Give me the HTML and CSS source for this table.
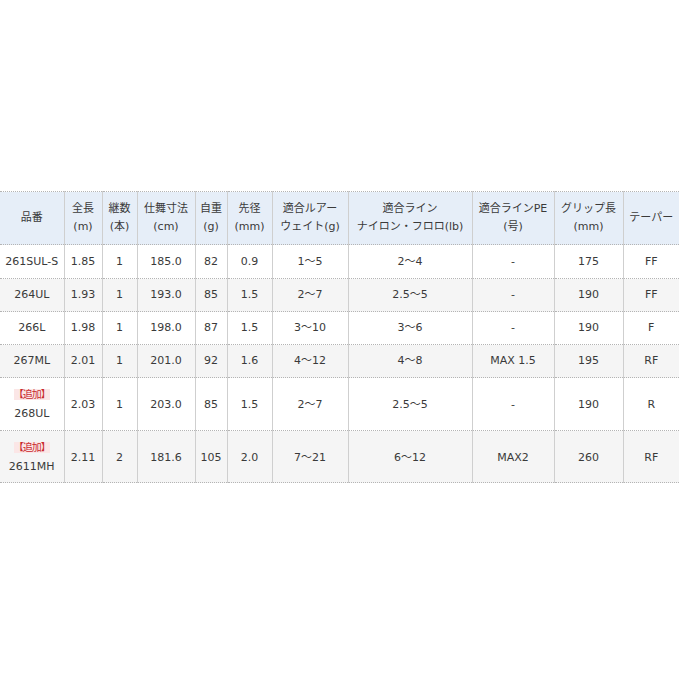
FILE: index.html
```html
<!DOCTYPE html>
<html lang="ja">
<head>
<meta charset="utf-8">
<title>スペック表</title>
<link rel="stylesheet" href="styles.css">
</head>
<body>
<div class="wrap">
<table class="spec">
  <colgroup>
    <col class="c1"><col class="c2"><col class="c3"><col class="c4"><col class="c5"><col class="c6"><col class="c7"><col class="c8"><col class="c9"><col class="c10"><col class="c11">
  </colgroup>
  <thead>
    <tr>
      <th>品番</th>
      <th>全長<br>(m)</th>
      <th>継数<br>(本)</th>
      <th>仕舞寸法<br>(cm)</th>
      <th>自重<br>(g)</th>
      <th>先径<br>(mm)</th>
      <th>適合ルアー<br>ウェイト(g)</th>
      <th>適合ライン<br>ナイロン・フロロ(lb)</th>
      <th>適合ラインPE<br>(号)</th>
      <th>グリップ長<br>(mm)</th>
      <th>テーパー</th>
    </tr>
  </thead>
  <tbody>
    <tr class="first">
      <td>261SUL-S</td><td>1.85</td><td>1</td><td>185.0</td><td>82</td><td>0.9</td><td>1～5</td><td>2～4</td><td>-</td><td>175</td><td>FF</td>
    </tr>
    <tr class="alt">
      <td>264UL</td><td>1.93</td><td>1</td><td>193.0</td><td>85</td><td>1.5</td><td>2～7</td><td>2.5～5</td><td>-</td><td>190</td><td>FF</td>
    </tr>
    <tr>
      <td>266L</td><td>1.98</td><td>1</td><td>198.0</td><td>87</td><td>1.5</td><td>3～10</td><td>3～6</td><td>-</td><td>190</td><td>F</td>
    </tr>
    <tr class="alt">
      <td>267ML</td><td>2.01</td><td>1</td><td>201.0</td><td>92</td><td>1.6</td><td>4～12</td><td>4～8</td><td>MAX 1.5</td><td>195</td><td>RF</td>
    </tr>
    <tr class="tall">
      <td><span class="new">【追加】</span><br>268UL</td><td>2.03</td><td>1</td><td>203.0</td><td>85</td><td>1.5</td><td>2～7</td><td>2.5～5</td><td>-</td><td>190</td><td>R</td>
    </tr>
    <tr class="alt tall last">
      <td><span class="new">【追加】</span><br>2611MH</td><td>2.11</td><td>2</td><td>181.6</td><td>105</td><td>2.0</td><td>7～21</td><td>6～12</td><td>MAX2</td><td>260</td><td>RF</td>
    </tr>
  </tbody>
</table>
</div>
</body>
</html>
```

FILE: styles.css
```css
html, body {
  margin: 0;
  padding: 0;
  background: #ffffff;
}

body {
  font-family: "DejaVu Sans", "Noto Sans CJK JP", sans-serif;
  font-size: 11px;
  color: #3a3a3a;
}

.wrap {
  padding-top: 191px;
  width: 679px;
  overflow: hidden;
}

.spec {
  border-collapse: collapse;
  table-layout: fixed;
  width: 679px;
}

.c1 { width: 64px; }
.c2 { width: 38px; }
.c3 { width: 35px; }
.c4 { width: 58px; }
.c5 { width: 32px; }
.c6 { width: 45px; }
.c7 { width: 76px; }
.c8 { width: 124px; }
.c9 { width: 82px; }
.c10 { width: 69px; }
.c11 { width: 56px; }

.spec th,
.spec td {
  text-align: center;
  vertical-align: middle;
  border-top: 1px dotted #b4b4b4;
  border-bottom: 1px dotted #b4b4b4;
  border-left: 1px solid #cfcfcf;
  border-right: 1px solid #cfcfcf;
  white-space: nowrap;
  font-weight: normal;
}

.spec th:first-child,
.spec td:first-child {
  border-left: none;
}

.spec th:last-child,
.spec td:last-child {
  border-right: none;
}

.spec th {
  background: #e6eef8;
  line-height: 18px;
  padding: 8px 0;
}

.spec td {
  line-height: 18px;
  padding: 7px 0;
  background: #ffffff;
}

.spec tr.first td {
  padding-top: 8px;
}

.spec tr.tall td {
  line-height: 19px;
  padding: 7px 0 7px;
}

.spec tr.last td {
  padding-bottom: 6px;
}

.spec tr.alt td {
  background: #f5f5f5;
}

.new {
  font-size: 10px;
  letter-spacing: -1px;
  color: #c8282d;
  background: #fbe6e6;
}
```
